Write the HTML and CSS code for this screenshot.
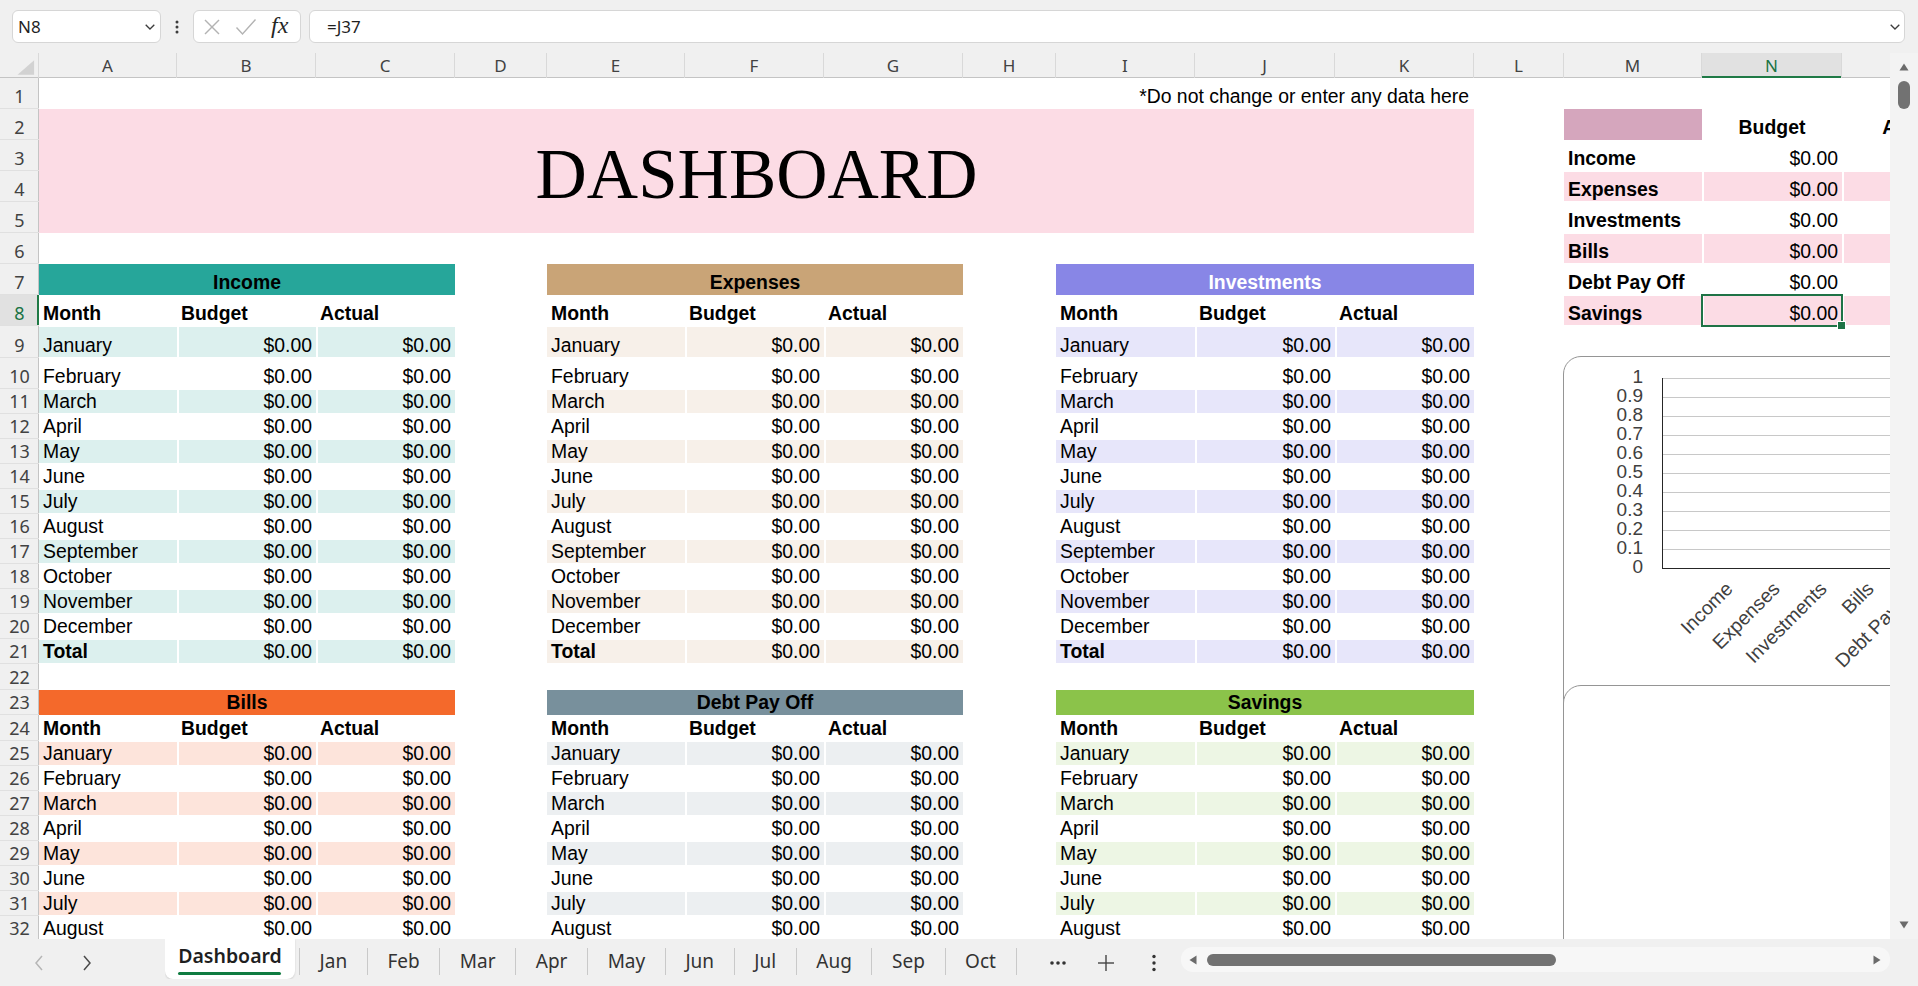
FILE: index.html
```html
<!DOCTYPE html>
<html lang="en">
<head>
<meta charset="utf-8">
<title>Dashboard</title>
<link rel="stylesheet" href="styles.css">
</head>
<body>
<div class="app">
  <div class="fbar">
    <div class="namebox"><span>N8</span><svg class="chev" width="10" height="6" viewBox="0 0 10 6"><polyline points="0.7,0.7 5,5 9.3,0.7" /></svg></div>
    <div class="fdots"><svg width="4" height="14" viewBox="0 0 4 14"><circle cx="2" cy="2" r="1.5"/><circle cx="2" cy="7" r="1.5"/><circle cx="2" cy="12" r="1.5"/></svg></div>
    <div class="fxbox">
      <svg class="ico-x" width="18" height="18" viewBox="0 0 18 18"><line x1="2" y1="2" x2="16" y2="16"/><line x1="16" y1="2" x2="2" y2="16"/></svg>
      <svg class="ico-ok" width="22" height="18" viewBox="0 0 22 18"><polyline points="1.5,9.5 7.5,16 20.5,1.5"/></svg>
      <span class="fx">fx</span>
    </div>
    <div class="finput"><span>=J37</span><svg class="chev" width="10" height="6" viewBox="0 0 10 6"><polyline points="0.7,0.7 5,5 9.3,0.7" /></svg></div>
  </div>

  <div class="main">
    <div class="sheet">
      <div class="colheads">
        <div class="corner"><svg width="39" height="25" viewBox="0 0 39 25"><polygon points="35,7 35,22 18,22"/></svg></div>
        <div>A</div><div>B</div><div>C</div><div>D</div><div>E</div><div>F</div><div>G</div><div>H</div><div>I</div><div>J</div><div>K</div><div>L</div><div>M</div><div class="on">N</div><div></div>
      </div>
      <div class="rowheads">
        <div>1</div><div>2</div><div>3</div><div>4</div><div>5</div><div>6</div><div>7</div><div class="on">8</div><div>9</div><div>10</div><div>11</div><div>12</div><div>13</div><div>14</div><div>15</div><div>16</div><div>17</div><div>18</div><div>19</div><div>20</div><div>21</div><div>22</div><div>23</div><div>24</div><div>25</div><div>26</div><div>27</div><div>28</div><div>29</div><div>30</div><div>31</div><div>32</div>
      </div>

      <div class="note">*Do not change or enter any data here</div>
      <div class="banner">DASHBOARD</div>

      <!-- Income -->
      <div class="tbl top c1 income">
        <div class="tt">Income</div>
        <div class="tr th"><div>Month</div><div>Budget</div><div>Actual</div></div>
        <div class="tr alt"><div>January</div><div class="n">$0.00</div><div class="n">$0.00</div></div>
        <div class="tr"><div>February</div><div class="n">$0.00</div><div class="n">$0.00</div></div>
        <div class="tr alt"><div>March</div><div class="n">$0.00</div><div class="n">$0.00</div></div>
        <div class="tr"><div>April</div><div class="n">$0.00</div><div class="n">$0.00</div></div>
        <div class="tr alt"><div>May</div><div class="n">$0.00</div><div class="n">$0.00</div></div>
        <div class="tr"><div>June</div><div class="n">$0.00</div><div class="n">$0.00</div></div>
        <div class="tr alt"><div>July</div><div class="n">$0.00</div><div class="n">$0.00</div></div>
        <div class="tr"><div>August</div><div class="n">$0.00</div><div class="n">$0.00</div></div>
        <div class="tr alt"><div>September</div><div class="n">$0.00</div><div class="n">$0.00</div></div>
        <div class="tr"><div>October</div><div class="n">$0.00</div><div class="n">$0.00</div></div>
        <div class="tr alt"><div>November</div><div class="n">$0.00</div><div class="n">$0.00</div></div>
        <div class="tr"><div>December</div><div class="n">$0.00</div><div class="n">$0.00</div></div>
        <div class="tr alt"><div class="b">Total</div><div class="n">$0.00</div><div class="n">$0.00</div></div>
      </div>

      <!-- Expenses -->
      <div class="tbl top c2 expenses">
        <div class="tt">Expenses</div>
        <div class="tr th"><div>Month</div><div>Budget</div><div>Actual</div></div>
        <div class="tr alt"><div>January</div><div class="n">$0.00</div><div class="n">$0.00</div></div>
        <div class="tr"><div>February</div><div class="n">$0.00</div><div class="n">$0.00</div></div>
        <div class="tr alt"><div>March</div><div class="n">$0.00</div><div class="n">$0.00</div></div>
        <div class="tr"><div>April</div><div class="n">$0.00</div><div class="n">$0.00</div></div>
        <div class="tr alt"><div>May</div><div class="n">$0.00</div><div class="n">$0.00</div></div>
        <div class="tr"><div>June</div><div class="n">$0.00</div><div class="n">$0.00</div></div>
        <div class="tr alt"><div>July</div><div class="n">$0.00</div><div class="n">$0.00</div></div>
        <div class="tr"><div>August</div><div class="n">$0.00</div><div class="n">$0.00</div></div>
        <div class="tr alt"><div>September</div><div class="n">$0.00</div><div class="n">$0.00</div></div>
        <div class="tr"><div>October</div><div class="n">$0.00</div><div class="n">$0.00</div></div>
        <div class="tr alt"><div>November</div><div class="n">$0.00</div><div class="n">$0.00</div></div>
        <div class="tr"><div>December</div><div class="n">$0.00</div><div class="n">$0.00</div></div>
        <div class="tr alt"><div class="b">Total</div><div class="n">$0.00</div><div class="n">$0.00</div></div>
      </div>

      <!-- Investments -->
      <div class="tbl top c3 investments">
        <div class="tt">Investments</div>
        <div class="tr th"><div>Month</div><div>Budget</div><div>Actual</div></div>
        <div class="tr alt"><div>January</div><div class="n">$0.00</div><div class="n">$0.00</div></div>
        <div class="tr"><div>February</div><div class="n">$0.00</div><div class="n">$0.00</div></div>
        <div class="tr alt"><div>March</div><div class="n">$0.00</div><div class="n">$0.00</div></div>
        <div class="tr"><div>April</div><div class="n">$0.00</div><div class="n">$0.00</div></div>
        <div class="tr alt"><div>May</div><div class="n">$0.00</div><div class="n">$0.00</div></div>
        <div class="tr"><div>June</div><div class="n">$0.00</div><div class="n">$0.00</div></div>
        <div class="tr alt"><div>July</div><div class="n">$0.00</div><div class="n">$0.00</div></div>
        <div class="tr"><div>August</div><div class="n">$0.00</div><div class="n">$0.00</div></div>
        <div class="tr alt"><div>September</div><div class="n">$0.00</div><div class="n">$0.00</div></div>
        <div class="tr"><div>October</div><div class="n">$0.00</div><div class="n">$0.00</div></div>
        <div class="tr alt"><div>November</div><div class="n">$0.00</div><div class="n">$0.00</div></div>
        <div class="tr"><div>December</div><div class="n">$0.00</div><div class="n">$0.00</div></div>
        <div class="tr alt"><div class="b">Total</div><div class="n">$0.00</div><div class="n">$0.00</div></div>
      </div>

      <!-- Bills -->
      <div class="tbl bot c1 bills">
        <div class="tt">Bills</div>
        <div class="tr th"><div>Month</div><div>Budget</div><div>Actual</div></div>
        <div class="tr alt"><div>January</div><div class="n">$0.00</div><div class="n">$0.00</div></div>
        <div class="tr"><div>February</div><div class="n">$0.00</div><div class="n">$0.00</div></div>
        <div class="tr alt"><div>March</div><div class="n">$0.00</div><div class="n">$0.00</div></div>
        <div class="tr"><div>April</div><div class="n">$0.00</div><div class="n">$0.00</div></div>
        <div class="tr alt"><div>May</div><div class="n">$0.00</div><div class="n">$0.00</div></div>
        <div class="tr"><div>June</div><div class="n">$0.00</div><div class="n">$0.00</div></div>
        <div class="tr alt"><div>July</div><div class="n">$0.00</div><div class="n">$0.00</div></div>
        <div class="tr"><div>August</div><div class="n">$0.00</div><div class="n">$0.00</div></div>
      </div>

      <!-- Debt Pay Off -->
      <div class="tbl bot c2 debt">
        <div class="tt">Debt Pay Off</div>
        <div class="tr th"><div>Month</div><div>Budget</div><div>Actual</div></div>
        <div class="tr alt"><div>January</div><div class="n">$0.00</div><div class="n">$0.00</div></div>
        <div class="tr"><div>February</div><div class="n">$0.00</div><div class="n">$0.00</div></div>
        <div class="tr alt"><div>March</div><div class="n">$0.00</div><div class="n">$0.00</div></div>
        <div class="tr"><div>April</div><div class="n">$0.00</div><div class="n">$0.00</div></div>
        <div class="tr alt"><div>May</div><div class="n">$0.00</div><div class="n">$0.00</div></div>
        <div class="tr"><div>June</div><div class="n">$0.00</div><div class="n">$0.00</div></div>
        <div class="tr alt"><div>July</div><div class="n">$0.00</div><div class="n">$0.00</div></div>
        <div class="tr"><div>August</div><div class="n">$0.00</div><div class="n">$0.00</div></div>
      </div>

      <!-- Savings -->
      <div class="tbl bot c3 savings">
        <div class="tt">Savings</div>
        <div class="tr th"><div>Month</div><div>Budget</div><div>Actual</div></div>
        <div class="tr alt"><div>January</div><div class="n">$0.00</div><div class="n">$0.00</div></div>
        <div class="tr"><div>February</div><div class="n">$0.00</div><div class="n">$0.00</div></div>
        <div class="tr alt"><div>March</div><div class="n">$0.00</div><div class="n">$0.00</div></div>
        <div class="tr"><div>April</div><div class="n">$0.00</div><div class="n">$0.00</div></div>
        <div class="tr alt"><div>May</div><div class="n">$0.00</div><div class="n">$0.00</div></div>
        <div class="tr"><div>June</div><div class="n">$0.00</div><div class="n">$0.00</div></div>
        <div class="tr alt"><div>July</div><div class="n">$0.00</div><div class="n">$0.00</div></div>
        <div class="tr"><div>August</div><div class="n">$0.00</div><div class="n">$0.00</div></div>
      </div>

      <!-- Summary -->
      <div class="summary">
        <div class="tr sh"><div class="swatch"></div><div class="c">Budget</div><div class="c">Actual</div></div>
        <div class="tr"><div class="b">Income</div><div class="n">$0.00</div><div></div></div>
        <div class="tr alt"><div class="b">Expenses</div><div class="n">$0.00</div><div></div></div>
        <div class="tr"><div class="b">Investments</div><div class="n">$0.00</div><div></div></div>
        <div class="tr alt"><div class="b">Bills</div><div class="n">$0.00</div><div></div></div>
        <div class="tr"><div class="b">Debt Pay Off</div><div class="n">$0.00</div><div></div></div>
        <div class="tr alt"><div class="b">Savings</div><div class="n sel">$0.00</div><div></div></div>
      </div>

      <!-- Charts floating over the sheet -->
      <div class="chart chart1">
        <svg class="plot" width="330" height="340" viewBox="0 0 330 340">
          <g class="grid">
            <line x1="98" y1="21.5" x2="330" y2="21.5"/>
            <line x1="98" y1="40.5" x2="330" y2="40.5"/>
            <line x1="98" y1="59.5" x2="330" y2="59.5"/>
            <line x1="98" y1="78.5" x2="330" y2="78.5"/>
            <line x1="98" y1="97.5" x2="330" y2="97.5"/>
            <line x1="98" y1="116.5" x2="330" y2="116.5"/>
            <line x1="98" y1="135.5" x2="330" y2="135.5"/>
            <line x1="98" y1="154.5" x2="330" y2="154.5"/>
            <line x1="98" y1="173.5" x2="330" y2="173.5"/>
            <line x1="98" y1="192.5" x2="330" y2="192.5"/>
          </g>
          <g class="axis">
            <line x1="98.5" y1="21" x2="98.5" y2="212"/>
            <line x1="98" y1="211.5" x2="330" y2="211.5"/>
          </g>
          <g class="ylab">
            <text x="79" y="26">1</text>
            <text x="79" y="45">0.9</text>
            <text x="79" y="64">0.8</text>
            <text x="79" y="83">0.7</text>
            <text x="79" y="102">0.6</text>
            <text x="79" y="121">0.5</text>
            <text x="79" y="140">0.4</text>
            <text x="79" y="159">0.3</text>
            <text x="79" y="178">0.2</text>
            <text x="79" y="197">0.1</text>
            <text x="79" y="216">0</text>
          </g>
          <g class="xlab">
            <text transform="translate(170,233) rotate(-45)">Income</text>
            <text transform="translate(217,233) rotate(-45)">Expenses</text>
            <text transform="translate(264,233) rotate(-45)">Investments</text>
            <text transform="translate(311,233) rotate(-45)">Bills</text>
            <text transform="translate(358,233) rotate(-45)">Debt Pay Off</text>
          </g>
        </svg>
      </div>
      <div class="chart chart2"></div>
    </div>

    <div class="vscroll">
      <svg class="arr" width="10" height="8" viewBox="0 0 10 8"><polygon points="5,0.5 9.5,7.5 0.5,7.5"/></svg>
      <div class="vthumb"></div>
      <div class="spacer"></div>
      <svg class="arr" width="10" height="8" viewBox="0 0 10 8"><polygon points="0.5,0.5 9.5,0.5 5,7.5"/></svg>
    </div>
  </div>

  <div class="tabbar">
    <div class="nav">
      <svg class="navl" width="10" height="16" viewBox="0 0 10 16"><polyline points="8,1 2,8 8,15"/></svg>
      <svg class="navr" width="10" height="16" viewBox="0 0 10 16"><polyline points="2,1 8,8 2,15"/></svg>
    </div>
    <div class="tabs">
      <div class="tab active">Dashboard</div>
      <div class="tab">Jan</div>
      <div class="tab">Feb</div>
      <div class="tab">Mar</div>
      <div class="tab">Apr</div>
      <div class="tab">May</div>
      <div class="tab">Jun</div>
      <div class="tab">Jul</div>
      <div class="tab">Aug</div>
      <div class="tab">Sep</div>
      <div class="tab last">Oct</div>
    </div>
    <div class="tools">
      <div class="tool"><svg width="16" height="4" viewBox="0 0 16 4"><circle cx="2" cy="2" r="1.8"/><circle cx="8" cy="2" r="1.8"/><circle cx="14" cy="2" r="1.8"/></svg></div>
      <div class="tool"><svg class="plus" width="18" height="18" viewBox="0 0 18 18"><line x1="9" y1="1" x2="9" y2="17"/><line x1="1" y1="9" x2="17" y2="9"/></svg></div>
      <div class="tool"><svg width="4" height="18" viewBox="0 0 4 18"><circle cx="2" cy="2.5" r="1.7"/><circle cx="2" cy="9" r="1.7"/><circle cx="2" cy="15.5" r="1.7"/></svg></div>
    </div>
    <div class="hscroll">
      <svg class="arr" width="8" height="10" viewBox="0 0 8 10"><polygon points="7.5,0.5 7.5,9.5 0.5,5"/></svg>
      <div class="hthumb"></div>
      <div class="spacer"></div>
      <svg class="arr" width="8" height="10" viewBox="0 0 8 10"><polygon points="0.5,0.5 7.5,5 0.5,9.5"/></svg>
    </div>
  </div>
</div>
</body>
</html>
```

FILE: styles.css
```css
* { box-sizing: border-box; margin: 0; padding: 0; }

html, body {
  width: 1918px;
  height: 986px;
  overflow: hidden;
}

body {
  font-family: "Liberation Sans", Arial, sans-serif;
  background: #f0f0f0;
  color: #000;
}

.app {
  display: flex;
  flex-direction: column;
  height: 986px;
}

/* ---------- formula bar ---------- */
.fbar {
  height: 53px;
  flex: none;
  display: flex;
  align-items: flex-start;
  padding: 10px 13px 0 12px;
  font-family: "Noto Sans", "Open Sans", sans-serif;
  font-size: 17px;
  color: #1f1f1f;
}

.namebox,
.fxbox,
.finput {
  height: 33px;
  background: #fff;
  border: 1px solid #d6d6d6;
  border-radius: 6px;
  display: flex;
  align-items: center;
}

.namebox {
  width: 149px;
  justify-content: space-between;
  padding: 0 5px 0 5px;
}

.chev polyline {
  fill: none;
  stroke: #3c3c3c;
  stroke-width: 1.3;
}

.fdots {
  width: 32px;
  height: 33px;
  display: flex;
  align-items: center;
  justify-content: center;
}

.fdots circle { fill: #3c3c3c; }

.fxbox {
  width: 108px;
  padding-left: 9px;
  gap: 14px;
}

.ico-x line,
.ico-ok polyline {
  fill: none;
  stroke: #b3b3b3;
  stroke-width: 1.4;
}

.fx {
  font-family: "Liberation Serif", "Times New Roman", serif;
  font-style: italic;
  font-size: 24px;
  color: #262626;
  margin-top: -3px;
}

.finput {
  flex: 1;
  margin-left: 8px;
  justify-content: space-between;
  padding: 0 4px 0 17px;
}

/* ---------- sheet ---------- */
.main {
  flex: none;
  height: 886px;
  display: flex;
}

.sheet {
  position: relative;
  width: 1890px;
  height: 886px;
  overflow: hidden;
  background: #fff;
  display: grid;
  grid-template-columns: 39px 138px 139px 139px 92px 138px 139px 139px 93px 139px 140px 139px 90px 138px 140px 140px;
  grid-template-rows: 25px repeat(8, 31px) 32px 31px repeat(11, 25px) 26px 25px 26px repeat(8, 25px);
  font-size: 19.4px;
}

.colheads {
  grid-row: 1;
  grid-column: 1 / -1;
  display: grid;
  grid-template-columns: subgrid;
  background: #f0f0f0;
  font-family: "Noto Sans", "Open Sans", sans-serif;
  font-size: 17px;
  color: #424242;
}

.colheads > div {
  display: flex;
  align-items: center;
  justify-content: center;
  border-right: 1px solid #d9d9d9;
  box-shadow: inset 0 -1px #c4c4c4;
}

.colheads > .corner {
  align-items: stretch;
  justify-content: stretch;
}

.corner polygon { fill: #d2d2d2; }

.colheads > .on {
  background: #e1e1e1;
  color: #1a7343;
  box-shadow: inset 0 -2px #1f7a46;
}

.rowheads {
  grid-row: 2 / -1;
  grid-column: 1;
  display: grid;
  grid-template-rows: subgrid;
  background: #f0f0f0;
  font-family: "Noto Sans", "Open Sans", sans-serif;
  font-size: 18px;
  color: #424242;
}

.rowheads > div {
  display: flex;
  align-items: flex-end;
  justify-content: center;
  padding-bottom: 0;
  line-height: 24px;
  border-bottom: 1px solid #e0e0e0;
  box-shadow: inset -1px 0 #c4c4c4;
}

.rowheads > .on {
  background: #e1e1e1;
  color: #1a7343;
  box-shadow: inset -2px 0 #1f7a46;
}

.note {
  grid-row: 2;
  grid-column: 2 / 13;
  display: flex;
  align-items: flex-end;
  justify-content: flex-end;
  padding: 0 5px 1px;
}

.banner {
  grid-row: 3 / 7;
  grid-column: 2 / 13;
  background: #fcdce5;
  display: flex;
  align-items: center;
  justify-content: center;
  padding-top: 6px;
  font-family: "Liberation Serif", "Times New Roman", serif;
  font-size: 71px;
}

/* ---------- tables ---------- */
.tbl,
.summary {
  display: grid;
  grid-template-columns: subgrid;
  grid-template-rows: subgrid;
}

.top { grid-row: 8 / 23; }
.bot { grid-row: 24 / 34; }
.c1 { grid-column: 2 / 5; }
.c2 { grid-column: 6 / 9; }
.c3 { grid-column: 10 / 13; }

.income { --hd: #26a69a; --tint: #dcf0ee; }
.expenses { --hd: #c9a477; --tint: #f7f0e9; }
.investments { --hd: #8886e6; --tint: #e7e6fa; }
.bills { --hd: #f4692b; --tint: #fde4db; }
.debt { --hd: #78909c; --tint: #eceff1; }
.savings { --hd: #8bc34a; --tint: #edf6e4; }

.tt {
  grid-column: 1 / -1;
  background: var(--hd);
  font-weight: 700;
  display: flex;
  align-items: flex-end;
  justify-content: center;
  padding-bottom: 1px;
}

.investments .tt { color: #fff; }

.tr {
  grid-column: 1 / -1;
  display: grid;
  grid-template-columns: subgrid;
}

.tr > div {
  display: flex;
  align-items: flex-end;
  padding: 0 4px 1px;
  white-space: nowrap;
}

.tr > .n { justify-content: flex-end; }
.tr > .c { justify-content: center; }
.tr > .b { font-weight: 700; }
.th { font-weight: 700; }

.tr.alt {
  background: var(--tint);
  box-shadow: inset 0 1px #fff, inset 0 -1px #fff;
}

.tr.alt > div + div { box-shadow: inset 2px 0 #fff; }

/* ---------- summary ---------- */
.summary {
  grid-row: 3 / 10;
  grid-column: 14 / 17;
  --tint: #fcdce5;
}

.sh { font-weight: 700; }

.sh > .swatch { background: #d5a6bd; }

.sel {
  position: relative;
  outline: 2px solid #1f7346;
  outline-offset: -1px;
}

.sel::after {
  content: "";
  position: absolute;
  right: -4px;
  bottom: -4px;
  width: 7px;
  height: 7px;
  background: #1f7346;
  border: 1px solid #fff;
}

/* ---------- charts ---------- */
.chart {
  position: absolute;
  left: 1563px;
  width: 420px;
  background: #fff;
  border: 1px solid #959595;
  border-top-left-radius: 18px;
}

.chart1 { top: 303px; height: 420px; }
.chart2 { top: 632px; height: 400px; }

.plot {
  position: absolute;
  left: 0;
  top: 0;
  font-family: "Liberation Sans", Arial, sans-serif;
  font-size: 19px;
}

.plot .grid line { stroke: #c8c8c8; stroke-width: 1; }
.plot .axis line { stroke: #262626; stroke-width: 1; }
.plot .ylab text { text-anchor: end; fill: #404040; }
.plot .xlab text { text-anchor: end; fill: #404040; font-size: 19.5px; }

/* ---------- vertical scrollbar ---------- */
.vscroll {
  width: 28px;
  height: 886px;
  background: #f3f3f3;
  display: flex;
  flex-direction: column;
  align-items: center;
  padding: 10px 0 10px;
}

.arr polygon { fill: #6b6b6b; }

.vthumb {
  width: 12px;
  height: 28px;
  margin-top: 10px;
  border-radius: 6px;
  background: #727272;
}

.spacer { flex: 1; }

/* ---------- tab bar ---------- */
.tabbar {
  flex: none;
  height: 47px;
  display: flex;
  align-items: flex-start;
  font-family: "Noto Sans", "Open Sans", sans-serif;
  font-size: 19px;
  color: #333;
}

.nav {
  width: 165px;
  height: 47px;
  display: flex;
  align-items: center;
  padding-left: 34px;
  gap: 38px;
}

.nav polyline { fill: none; stroke-width: 1.5; }
.navl polyline { stroke: #b5b5b5; }
.navr polyline { stroke: #4a4a4a; }

.tabs {
  width: 865px;
  display: flex;
  align-items: flex-start;
  overflow: hidden;
}

.tab {
  margin-top: 9px;
  height: 27px;
  padding: 0 19.6px 2px;
  display: flex;
  align-items: center;
  border-left: 1px solid #c9c9c9;
  white-space: nowrap;
}

.tab.last { border-right: 1px solid #c9c9c9; }

.tab.active {
  position: relative;
  margin-top: 0;
  margin-right: 4px;
  width: 130px;
  height: 40px;
  padding: 0 0 8px;
  justify-content: center;
  border-left: none;
  background: #fff;
  border-radius: 0 0 8px 8px;
  box-shadow: 0 1px 2px rgba(0, 0, 0, 0.14);
  color: #1f1f1f;
  font-size: 19.5px;
  font-weight: 600;
}

.tab.active::after {
  content: "";
  position: absolute;
  left: 13px;
  right: 14px;
  top: 33px;
  height: 3px;
  border-radius: 2px;
  background: #107c41;
}

.tools {
  width: 151px;
  height: 47px;
  display: flex;
  padding-left: 4px;
}

.tool {
  width: 48px;
  height: 47px;
  display: flex;
  align-items: center;
  justify-content: center;
}

.tool circle { fill: #333; }
.plus line { stroke: #444; stroke-width: 1.4; }

.hscroll {
  width: 709px;
  height: 25px;
  margin-top: 8px;
  background: #f7f7f7;
  border-radius: 12px;
  display: flex;
  align-items: center;
  padding: 0 9px 0 8px;
}

.hthumb {
  width: 349px;
  height: 12px;
  margin-left: 10px;
  border-radius: 6px;
  background: #727272;
}
```
